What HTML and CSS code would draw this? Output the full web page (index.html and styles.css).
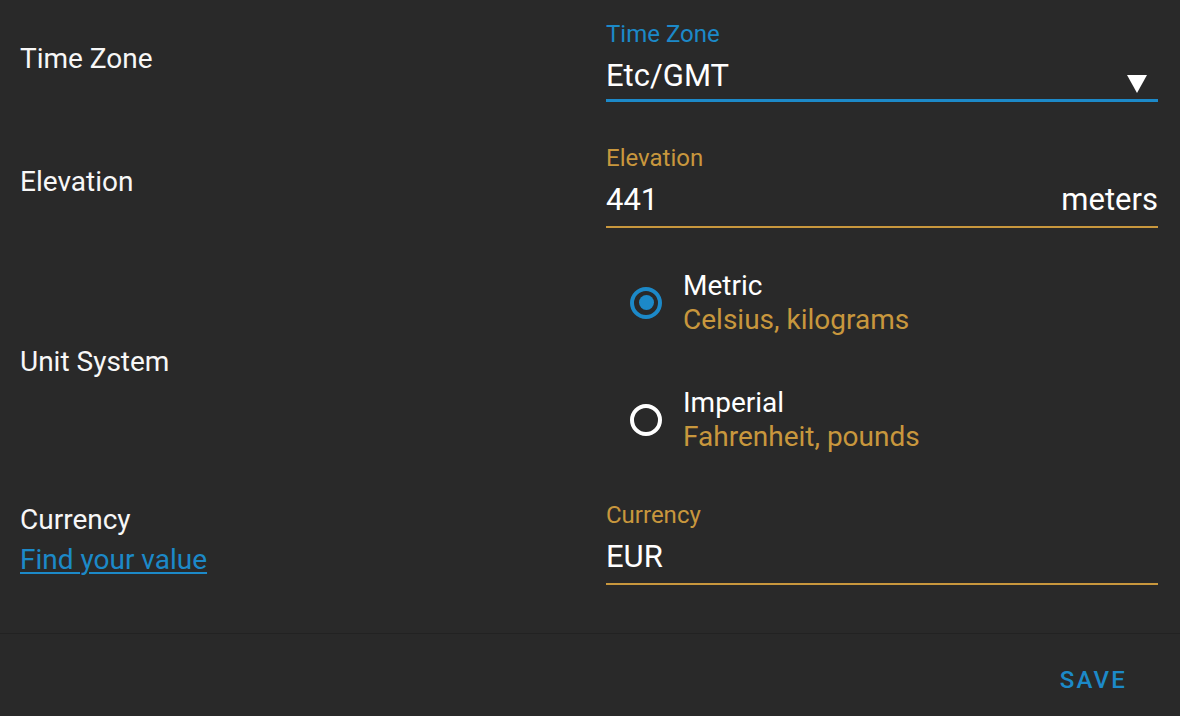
FILE: index.html
```html
<!DOCTYPE html>
<html lang="en">
<head>
<meta charset="utf-8">
<title>General configuration</title>
<link rel="stylesheet" href="styles.css">
</head>
<body>
<div class="card">
  <div class="card-content">
    <div class="row row-timezone">
      <div class="row-label">Time Zone</div>
      <div class="field focused">
        <div class="field-label">Time Zone</div>
        <div class="field-input">
          <span class="field-value">Etc/GMT</span>
          <svg class="dropdown-arrow" width="20" height="18" viewBox="0 0 20 18"><path d="M0 0H20L10 18Z" fill="#ffffff"/></svg>
        </div>
      </div>
    </div>

    <div class="row row-elevation">
      <div class="row-label">Elevation</div>
      <div class="field">
        <div class="field-label">Elevation</div>
        <div class="field-input">
          <span class="field-value">441</span>
          <span class="field-suffix">meters</span>
        </div>
      </div>
    </div>

    <div class="row row-units">
      <div class="row-label">Unit System</div>
      <div class="radio-group">
        <div class="radio-item">
          <span class="radio checked"><span class="radio-dot"></span></span>
          <div class="radio-text">
            <div class="radio-title">Metric</div>
            <div class="radio-desc">Celsius, kilograms</div>
          </div>
        </div>
        <div class="radio-item">
          <span class="radio"></span>
          <div class="radio-text">
            <div class="radio-title">Imperial</div>
            <div class="radio-desc">Fahrenheit, pounds</div>
          </div>
        </div>
      </div>
    </div>

    <div class="row row-currency">
      <div class="row-label-block">
        <div class="row-label">Currency</div>
        <a class="row-link" href="#">Find your value</a>
      </div>
      <div class="field">
        <div class="field-label">Currency</div>
        <div class="field-input">
          <span class="field-value">EUR</span>
        </div>
      </div>
    </div>
  </div>
  <div class="card-actions">
    <button class="btn-save" type="button">Save</button>
  </div>
</div>
</body>
</html>
```

FILE: styles.css
```css
html, body {
  margin: 0;
  padding: 0;
  background: #292929;
  height: 100%;
  overflow: hidden;
}

body {
  font-family: Roboto, "Noto Sans", "Liberation Sans", sans-serif;
  color: #f5f5f5;
}

.card-content {
  padding: 20px 22px 48px 20px;
}

.row {
  display: grid;
  grid-template-columns: 586px 1fr;
  align-items: start;
}

.row-label {
  font-size: 28px;
  line-height: 40px;
  color: #f7f7f7;
}

.row-timezone .row-label {
  margin-top: 19px;
}

.row-elevation .row-label {
  margin-top: 18px;
}

.row-elevation {
  margin-top: 42px;
}

.row-units {
  margin-top: 16px;
  align-items: center;
}

.row-units .row-label {
  margin-top: 1px;
}

.row-currency {
  margin-top: 19px;
}

.row-currency .field {
  margin-top: 4px;
}

.row-label-block {
  display: flex;
  flex-direction: column;
  margin-top: 3px;
}

.row-link {
  font-size: 28px;
  line-height: 40px;
  color: #1c89c8;
  text-decoration: underline;
  text-underline-offset: 3px;
  text-decoration-thickness: 2px;
  align-self: flex-start;
}

.field-label {
  font-size: 24px;
  line-height: 28px;
  color: #c8973d;
}

.field-input {
  display: flex;
  justify-content: space-between;
  align-items: flex-start;
  padding-top: 8px;
  padding-bottom: 6px;
  border-bottom: 2px solid #c8973d;
  font-size: 31px;
  line-height: 40px;
  color: #ffffff;
}

.field.focused .field-label {
  color: #1c89c8;
}

.field.focused .field-input {
  padding-bottom: 3px;
  border-bottom: 3px solid #1c89c8;
}

.dropdown-arrow {
  align-self: flex-end;
  margin-bottom: 3px;
  margin-right: 11px;
}

.radio-group {
  display: flex;
  flex-direction: column;
}

.radio-item {
  display: flex;
  align-items: center;
  height: 117px;
}

.radio {
  box-sizing: border-box;
  width: 32px;
  height: 32px;
  margin-left: 24px;
  margin-right: 21px;
  border: 4px solid #ffffff;
  border-radius: 50%;
  display: flex;
  align-items: center;
  justify-content: center;
  flex: none;
}

.radio.checked {
  border-color: #1c89c8;
}

.radio-dot {
  width: 15px;
  height: 15px;
  border-radius: 50%;
  background: #1c89c8;
}

.radio-text {
  font-size: 28px;
  line-height: 34px;
}

.radio-title {
  color: #ffffff;
}

.radio-desc {
  color: #c8973d;
}

.card-actions {
  border-top: 1px solid #222222;
  display: flex;
  justify-content: flex-end;
  padding: 15px 39px 0 0;
}

.btn-save {
  background: none;
  border: none;
  padding: 0 14px;
  font-family: Roboto, "Noto Sans", "Liberation Sans", sans-serif;
  font-size: 24px;
  font-weight: 500;
  line-height: 63px;
  letter-spacing: 0.09em;
  text-transform: uppercase;
  color: #1c89c8;
  cursor: pointer;
}
```
